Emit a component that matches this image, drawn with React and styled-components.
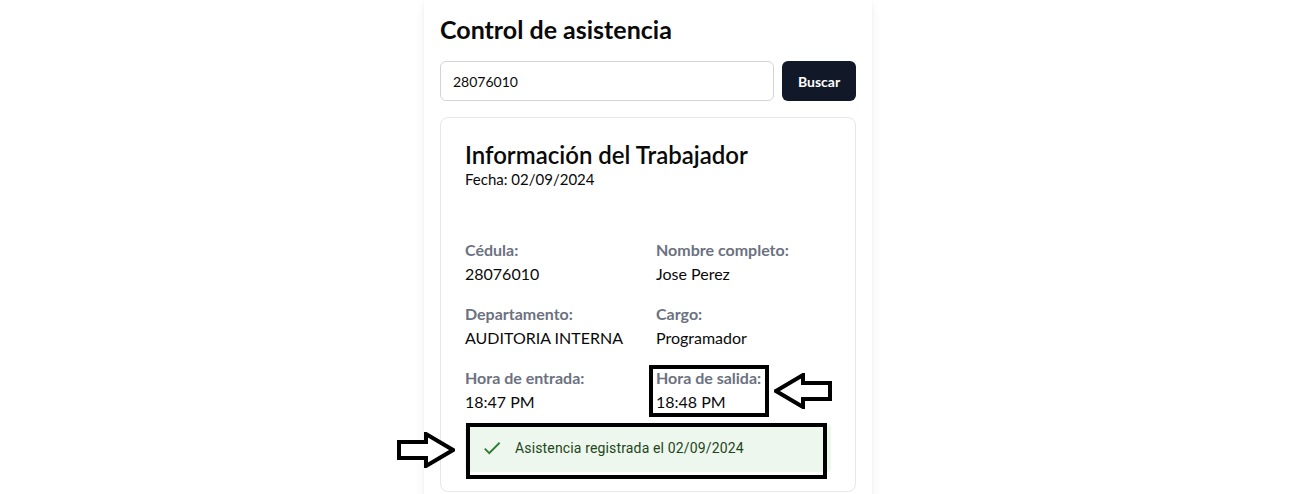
import React from 'react'
import styled, { createGlobalStyle } from 'styled-components'

const GlobalStyle = createGlobalStyle`
  html, body {
    margin: 0;
    padding: 0;
    background: #ffffff;
    overflow: hidden;
  }
  body {
    font-family: Lato, "Noto Sans", sans-serif;
    color: #0a0a0a;
  }
  * { box-sizing: border-box; }
`

const Page = styled.div`
  display: flex;
  justify-content: center;
  padding-right: 13px;
`

const Panel = styled.div`
  width: 448px;
  min-height: 520px;
  background: #ffffff;
  padding: 13px 16px 24px;
  box-shadow: 0 4px 10px rgba(0, 0, 0, 0.06), 0 1px 3px rgba(0, 0, 0, 0.05);
`

const Heading = styled.h1`
  margin: 0;
  font-size: 25px;
  line-height: 32px;
  font-weight: 700;
`

const SearchRow = styled.div`
  display: flex;
  gap: 8px;
  margin-top: 16px;
`

const Input = styled.input`
  flex: 1;
  height: 40px;
  border: 1px solid #d1d5db;
  border-radius: 6px;
  padding: 0 12px;
  font-family: inherit;
  font-size: 14px;
  color: #0a0a0a;
  outline: none;
`

const Button = styled.button`
  height: 40px;
  width: 74px;
  padding: 0;
  border: none;
  border-radius: 6px;
  background: #111827;
  color: #ffffff;
  font-family: inherit;
  font-size: 14px;
  font-weight: 700;
`

const Card = styled.div`
  margin-top: 16px;
  border: 1px solid #e5e7eb;
  border-radius: 8px;
  padding: 24px 24px 19px;
`

const CardTitle = styled.h2`
  margin: 0;
  font-size: 24px;
  line-height: 26px;
  font-weight: 600;
`

const DateLine = styled.div`
  font-size: 15px;
  line-height: 22px;
`

const InfoGrid = styled.div`
  display: grid;
  grid-template-columns: 1fr 1fr;
  column-gap: 16px;
  row-gap: 16px;
  margin-top: 48px;
`

const Field = styled.div`
  position: relative;
`

const Label = styled.div`
  font-size: 16px;
  line-height: 24px;
  font-weight: 700;
  color: #6b7280;
`

const Value = styled.div`
  font-size: 16px;
  line-height: 24px;
  color: #0a0a0a;
`

const HighlightBox = styled.div`
  position: absolute;
  left: -7px;
  top: -1px;
  width: 120px;
  height: 52px;
  border: 4px solid #000000;
`

const Arrow = styled.svg`
  position: absolute;
  left: ${p => p.$left}px;
  top: ${p => p.$top}px;
`

const AlertWrap = styled.div`
  position: relative;
  margin-top: 10px;
`

const Alert = styled.div`
  display: flex;
  align-items: flex-start;
  padding: 6px 16px;
  border-radius: 4px;
  background: #edf7ed;
  color: #1e4620;
  font-family: Roboto, "Liberation Sans", sans-serif;
  font-size: 14px;
  line-height: 20px;
  letter-spacing: 0.15px;
`

const AlertIcon = styled.div`
  display: flex;
  padding: 7px 0;
  margin-right: 12px;
  color: #2e7d32;
`

const AlertText = styled.div`
  padding: 8px 0;
`

const AlertBox = styled.div`
  position: absolute;
  left: 1px;
  top: -1px;
  right: 4px;
  bottom: -7px;
  border: 4px solid #000000;
`

const fields = [
  ['Cédula:', '28076010'],
  ['Nombre completo:', 'Jose Perez'],
  ['Departamento:', 'AUDITORIA INTERNA'],
  ['Cargo:', 'Programador'],
  ['Hora de entrada:', '18:47 PM'],
  ['Hora de salida:', '18:48 PM'],
]

const ArrowShape = ({ left, top, flip }) => (
  <Arrow $left={left} $top={top} width="58" height="36" viewBox="0 0 58 36">
    <polygon
      points={flip ? '2,18 29,2 29,10 56,10 56,26 29,26 29,34' : '2,10 29,10 29,2 56,18 29,34 29,26 2,26'}
      fill="#ffffff"
      stroke="#000000"
      strokeWidth="4"
      strokeLinejoin="miter"
    />
  </Arrow>
)

const App = () => {
  return (
    <>
      <GlobalStyle />
      <Page>
        <Panel>
          <Heading>Control de asistencia</Heading>
          <SearchRow>
            <Input defaultValue="28076010" />
            <Button>Buscar</Button>
          </SearchRow>
          <Card>
            <CardTitle>Información del Trabajador</CardTitle>
            <DateLine>Fecha: 02/09/2024</DateLine>
            <InfoGrid>
              {fields.map(([label, value], i) => (
                <Field key={label}>
                  <Label>{label}</Label>
                  <Value>{value}</Value>
                  {i === 5 && (
                    <>
                      <HighlightBox />
                      <ArrowShape left={118} top={7} flip />
                    </>
                  )}
                </Field>
              ))}
            </InfoGrid>
            <AlertWrap>
              <Alert>
                <AlertIcon>
                  <svg width="22" height="22" viewBox="0 0 24 24" fill="currentColor">
                    <path d="M9 16.17 4.83 12l-1.42 1.41L9 19 21 7l-1.41-1.41z" />
                  </svg>
                </AlertIcon>
                <AlertText>Asistencia registrada el 02/09/2024</AlertText>
              </Alert>
              <AlertBox />
              <ArrowShape left={-68} top={8} />
            </AlertWrap>
          </Card>
        </Panel>
      </Page>
    </>
  )
}

export default App
